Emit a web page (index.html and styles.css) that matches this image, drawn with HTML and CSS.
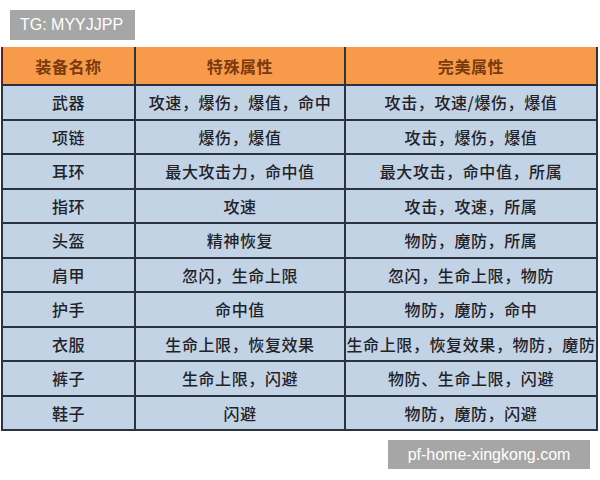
FILE: index.html
```html
<!DOCTYPE html>
<html lang="zh">
<head>
<meta charset="utf-8">
<link rel="stylesheet" href="styles.css">
</head>
<body>
<div class="page">
  <div class="tag">TG: MYYJJPP</div>
  <table class="gear">
    <thead>
      <tr><th class="c1">装备名称</th><th class="c2">特殊属性</th><th class="c3">完美属性</th></tr>
    </thead>
    <tbody>
      <tr><td>武器</td><td>攻速，爆伤，爆值，命中</td><td>攻击，攻速/爆伤，爆值</td></tr>
      <tr><td>项链</td><td>爆伤，爆值</td><td>攻击，爆伤，爆值</td></tr>
      <tr><td>耳环</td><td>最大攻击力，命中值</td><td>最大攻击，命中值，所属</td></tr>
      <tr><td>指环</td><td>攻速</td><td>攻击，攻速，所属</td></tr>
      <tr><td>头盔</td><td>精神恢复</td><td>物防，魔防，所属</td></tr>
      <tr><td>肩甲</td><td>忽闪，生命上限</td><td>忽闪，生命上限，物防</td></tr>
      <tr><td>护手</td><td>命中值</td><td>物防，魔防，命中</td></tr>
      <tr><td>衣服</td><td>生命上限，恢复效果</td><td>生命上限，恢复效果，物防，魔防</td></tr>
      <tr><td>裤子</td><td>生命上限，闪避</td><td>物防、生命上限，闪避</td></tr>
      <tr><td>鞋子</td><td>闪避</td><td>物防，魔防，闪避</td></tr>
    </tbody>
  </table>
  <div class="foot">
    <div class="site">pf-home-xingkong.com</div>
  </div>
</div>
</body>
</html>
```

FILE: styles.css
```css
html, body {
  margin: 0;
  padding: 0;
  background: #ffffff;
}
.page {
  width: 600px;
  height: 480px;
  padding-top: 10px;
  box-sizing: border-box;
  font-family: "Noto Sans CJK SC", "Noto Sans", sans-serif;
}
.tag {
  margin-left: 10px;
  width: 125px;
  height: 30px;
  background: #a6a6a6;
  color: #ffffff;
  font-family: "Liberation Sans", Arial, sans-serif;
  font-size: 16px;
  line-height: 30px;
  padding-left: 10px;
  box-sizing: border-box;
}
.gear {
  margin-top: 7px;
  margin-left: 1px;
  width: 597px;
  border-collapse: collapse;
  table-layout: fixed;
}
.gear th, .gear td {
  border: 2px solid #2b3240;
  text-align: center;
  padding: 0;
  font-size: 16px;
  letter-spacing: 0.6px;
  color: #1f2328;
  white-space: nowrap;
  overflow: hidden;
}
.gear th {
  background: #f79a4a;
  color: #7a3a0e;
  font-weight: bold;
  height: 37px;
  border-top: none;
}
.gear td {
  background: #c3d3e6;
  height: 32.5px;
  font-weight: 500;
}
.gear .c1 { width: 131px; }
.gear .c2 { width: 208px; }
.gear th.c1 { border-left-color: #6b1a1a; }
.foot {
  display: flex;
  justify-content: flex-end;
  padding-right: 10px;
  margin-top: 9px;
}
.site {
  width: 202px;
  height: 29px;
  background: #a6a6a6;
  color: #ffffff;
  font-family: "Liberation Sans", Arial, sans-serif;
  font-size: 16px;
  line-height: 29px;
  text-align: center;
}
```
